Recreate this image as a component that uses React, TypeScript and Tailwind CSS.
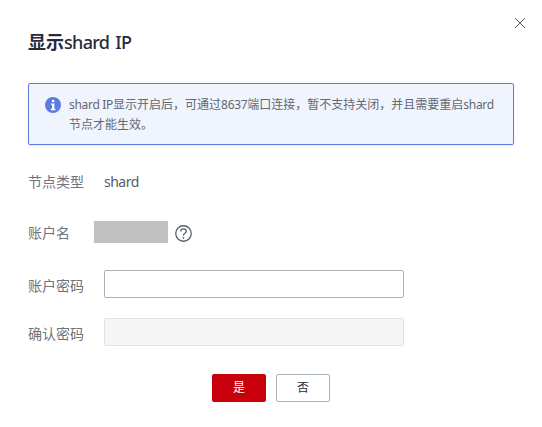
import React from "react";

const labelClass = "w-[76px] shrink-0 text-[14px] text-[#6f737c]";
const latinClass = "tracking-[-0.3px]";

export default function App() {
  return (
    <div className="relative h-[427px] w-[542px] overflow-hidden bg-white pl-7 pr-7 font-['Noto_Sans','Noto_Sans_CJK_SC',sans-serif]">
      {/* Close */}
      <button className="absolute right-[16px] top-[17px] h-3 w-3 text-[#575d6c]">
        <svg viewBox="0 0 12 12" className="h-3 w-3" fill="none" stroke="currentColor" strokeWidth="1">
          <path d="M1 1l10 10M11 1L1 11" />
        </svg>
      </button>

      <h2 className="pt-[30px] text-[18px] leading-[24px] text-[#252b3a]">
        <span className="font-bold">显示</span>
        <span className="font-medium tracking-[-0.7px] [word-spacing:2px]">shard IP</span>
      </h2>

      {/* Notice */}
      <div className="mt-[29px] flex h-[62px] w-[486px] items-start rounded-[2px] border border-[#5e7ce0] bg-[#f0f4fd] pl-[16px] pt-[11px] shadow-[0_1px_2px_rgba(94,124,224,0.2)]">
        <svg viewBox="0 0 16 16" className="mt-[2px] h-4 w-4 shrink-0">
          <circle cx="8" cy="8" r="8" fill="#5e7ce0" />
          <rect x="6.8" y="2.8" width="2.6" height="2.4" rx="1" fill="#fff" />
          <path d="M6 6.4h3.4v5.4h1v1.4H5.8v-1.4h1.2V7.8H6z" fill="#fff" />
        </svg>
        <p className="ml-[8px] w-[430px] text-[12px] leading-[20px] text-[#636873]">
          <span className={latinClass}>shard IP</span>显示开启后，可通过<span className={latinClass}>8637</span>端口连接，暂不支持关闭，并且需要重启<span className={latinClass}>shard</span>节点才能生效。
        </p>
      </div>

      {/* Form */}
      <div className="mt-[26px] flex h-[20px] items-center">
        <span className={labelClass}>节点类型</span>
        <span className="text-[14px] tracking-[-0.5px] text-[#575d6c]">shard</span>
      </div>

      <div className="mt-[30px] flex h-[22px] items-center">
        <span className="w-[66px] shrink-0 text-[14px] text-[#6f737c]">账户名</span>
        <div className="h-[22px] w-[74px] bg-[#c1c1c1]" />
        <svg viewBox="0 0 16 16" className="ml-[7px] mt-[2px] h-[17px] w-[17px] shrink-0" fill="none" stroke="#575d6c" strokeWidth="1.2">
          <circle cx="8" cy="8" r="7.3" />
          <path d="M5.4 6.1c0-1.4 1.1-2.4 2.6-2.4s2.6.9 2.6 2.2c0 1.1-.7 1.6-1.4 2.1-.8.5-1.2.9-1.2 1.7v.4" />
          <circle cx="8" cy="12.2" r=".8" fill="#575d6c" stroke="none" />
        </svg>
      </div>

      <div className="mt-[27px] flex h-[28px] items-center">
        <span className={`${labelClass} mt-[3px]`}>账户密码</span>
        <input type="password" className="h-[28px] w-[300px] rounded-[2px] border border-[#adb0b8] bg-white outline-none" />
      </div>

      <div className="mt-[20px] flex h-[28px] items-center">
        <span className={`${labelClass} mt-[3px]`}>确认密码</span>
        <input type="password" disabled className="h-[28px] w-[300px] rounded-[2px] border border-[#dfe1e6] bg-[#f5f5f6] outline-none" />
      </div>

      {/* Actions */}
      <div className="mt-[28px] flex justify-center gap-[10px]">
        <button className="h-[28px] w-[54px] rounded-[2px] bg-[#c7000b] text-[12px] text-white">是</button>
        <button className="h-[28px] w-[54px] rounded-[2px] border border-[#adb0b8] bg-white text-[12px] text-[#252b3a]">否</button>
      </div>
    </div>
  );
}
